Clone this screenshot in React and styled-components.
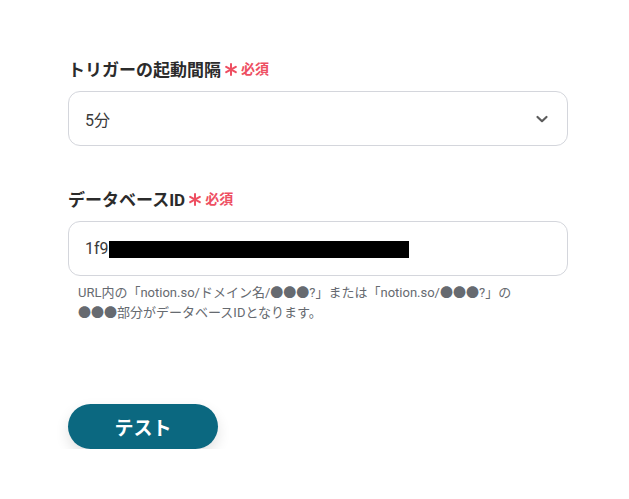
import React from 'react';
import styled, { createGlobalStyle } from 'styled-components';

const Global = createGlobalStyle`
  body {
    margin: 0;
    background: #fff;
    font-family: Roboto, "Noto Sans CJK JP", sans-serif;
    color: #333;
  }
`;

const Page = styled.div`
  width: 500px;
  padding: 56px 0 0 68px;
  display: flex;
  flex-direction: column;
`;

const Field = styled.div`
  display: flex;
  flex-direction: column;
  margin-bottom: ${(p) => p.mb || 0}px;
`;

const Label = styled.div`
  display: flex;
  align-items: center;
  height: 24px;
  font-size: 17px;
  font-weight: 700;
  color: #2b2b2b;
  margin-bottom: 11px;
`;

const Required = styled.span`
  display: flex;
  align-items: center;
  gap: 4px;
  margin-left: 4px;
  color: #ee4f62;
  font-size: 14px;
  font-weight: 700;
`;

const Box = styled.div`
  box-sizing: border-box;
  height: 55px;
  border: 1px solid #d4d6dc;
  border-radius: 12px;
  display: flex;
  align-items: center;
  justify-content: space-between;
  padding: 0 18px 0 16px;
  font-size: 16px;
  color: #3a3a3a;
`;

const Redacted = styled.span`
  display: inline-block;
  width: 300px;
  height: 17px;
  background: #000;
  vertical-align: middle;
`;

const Help = styled.div`
  padding: 7px 0 0 10px;
  font-size: 13px;
  line-height: 20px;
  color: #666a70;
`;

const Button = styled.button`
  margin-top: 81px;
  width: 150px;
  height: 45px;
  border: none;
  border-radius: 23px;
  background: #0b6880;
  color: #fff;
  font-family: inherit;
  font-size: 19px;
  font-weight: 700;
  box-shadow: 0 6px 14px rgba(0, 0, 0, 0.12);
`;

const Star = () => (
  <svg width="12" height="13" viewBox="0 0 12 13" style={{ marginTop: 3 }}>
    <g stroke="#ee4f62" strokeWidth="2" strokeLinecap="round">
      <line x1="6" y1="1" x2="6" y2="12" />
      <line x1="1.2" y1="3.8" x2="10.8" y2="9.2" />
      <line x1="1.2" y1="9.2" x2="10.8" y2="3.8" />
    </g>
  </svg>
);

const Chevron = () => (
  <svg width="14" height="14" viewBox="0 0 14 14">
    <path d="M2.5 5 L7 9.2 L11.5 5" fill="none" stroke="#5c5c5c" strokeWidth="2.2" strokeLinecap="round" strokeLinejoin="round" />
  </svg>
);

export default function App() {
  return (
    <>
      <Global />
      <Page>
        <Field mb={40}>
          <Label>
            トリガーの起動間隔
            <Required><Star />必須</Required>
          </Label>
          <Box>
            <span>5分</span>
            <Chevron />
          </Box>
        </Field>
        <Field>
          <Label>
            データベースID
            <Required><Star />必須</Required>
          </Label>
          <Box>
            <span>1f9<Redacted /></span>
          </Box>
          <Help>
            URL内の「notion.so/ドメイン名/●●●?」または「notion.so/●●●?」の<br />
            ●●●部分がデータベースIDとなります。
          </Help>
        </Field>
        <Button>テスト</Button>
      </Page>
    </>
  );
}
